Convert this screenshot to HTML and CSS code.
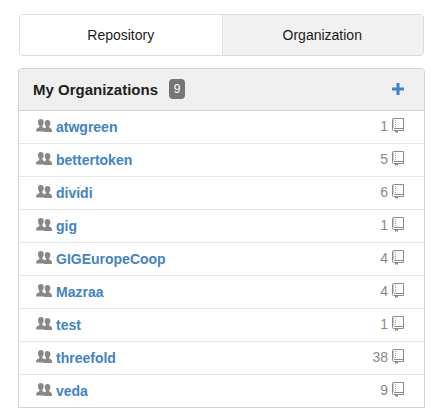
FILE: index.html
```html
<!DOCTYPE html>
<html lang="en">
<head>
<meta charset="utf-8">
<title>My Organizations</title>
<link rel="stylesheet" href="styles.css">
</head>
<body>
<svg class="symbols" aria-hidden="true">
  <symbol id="people" viewBox="0 0 16 13">
    <path d="M4.800 0C2.900 0 2 1.200 2 3c0 1.700.500 3 1.400 3.900v1C3.200 8.700.200 9 .2 10.800V12.500H8.500V9.600c-.400-.900-1.900-1.100-2.200-1.800v-1C7.200 6 7.700 4.700 7.700 3 7.700 1.200 6.700 0 4.800 0z"/>
    <path d="M11.400 1C9.600 1 8.700 2.200 8.700 3.900c0 1.500.500 2.700 1.300 3.400v1l-2 1.400V13h8v-2c0-1.600-2.500-1.900-2.900-2.700v-1c.800-.700 1.300-1.900 1.300-3.400C14.400 2.200 13.200 1 11.400 1z"/>
  </symbol>
  <symbol id="repo" viewBox="0 0 12 15">
    <path fill="none" stroke="currentColor" d="M3 12.500H1.500q-1 0-1-1V1.500q0-1 1-1h10v12H6M2 10.500h9"/>
    <path opacity=".45" d="M1 1h1v9H1z"/>
    <path opacity=".8" d="M3 2h1v1H3zm0 2h1v1H3zm0 2h1v1H3zm0 2h1v1H3z"/>
    <path d="M3 12h3v3l-1.500-1L3 15z"/>
  </symbol>
</svg>
<main>
  <div class="tabs" role="tablist">
    <button class="tab" type="button" role="tab" aria-selected="false">Repository</button>
    <button class="tab active" type="button" role="tab" aria-selected="true">Organization</button>
  </div>
  <section class="panel">
    <header class="panel-header">
      <h2>My Organizations</h2>
      <span class="badge">9</span>
      <a class="add" href="#" aria-label="New organization"><svg viewBox="0 0 12 12"><path d="M4.500 0h3v4.500H12v3H7.500V12h-3V7.500H0v-3h4.500z"/></svg></a>
    </header>
    <ul class="list">
      <li><svg class="people"><use href="#people"/></svg><a href="#">atwgreen</a><span class="count">1</span><svg class="repo"><use href="#repo"/></svg></li>
      <li><svg class="people"><use href="#people"/></svg><a href="#">bettertoken</a><span class="count">5</span><svg class="repo"><use href="#repo"/></svg></li>
      <li><svg class="people"><use href="#people"/></svg><a href="#">dividi</a><span class="count">6</span><svg class="repo"><use href="#repo"/></svg></li>
      <li><svg class="people"><use href="#people"/></svg><a href="#">gig</a><span class="count">1</span><svg class="repo"><use href="#repo"/></svg></li>
      <li><svg class="people"><use href="#people"/></svg><a href="#">GIGEuropeCoop</a><span class="count">4</span><svg class="repo"><use href="#repo"/></svg></li>
      <li><svg class="people"><use href="#people"/></svg><a href="#">Mazraa</a><span class="count">4</span><svg class="repo"><use href="#repo"/></svg></li>
      <li><svg class="people"><use href="#people"/></svg><a href="#">test</a><span class="count">1</span><svg class="repo"><use href="#repo"/></svg></li>
      <li><svg class="people"><use href="#people"/></svg><a href="#">threefold</a><span class="count">38</span><svg class="repo"><use href="#repo"/></svg></li>
      <li><svg class="people"><use href="#people"/></svg><a href="#">veda</a><span class="count">9</span><svg class="repo"><use href="#repo"/></svg></li>
    </ul>
  </section>
</main>
</body>
</html>
```
FILE: styles.css
```css
* {
  box-sizing: border-box;
}

body {
  margin: 0;
  background: #fff;
  color: #212121;
  font: 14px/20px "Liberation Sans", Arial, sans-serif;
}

main {
  padding: 14px 16px 10px 18px;
}

svg {
  display: block;
  flex: none;
  fill: currentColor;
}

.symbols {
  position: absolute;
  width: 0;
  height: 0;
}

.tabs {
  display: flex;
  margin: 0 1px 12px;
  border: 1px solid #dcdcdc;
  border-radius: 4px;
  overflow: hidden;
}

.tab {
  flex: 1;
  height: 40px;
  padding: 0;
  border: 0;
  background: #fff;
  color: #1c1c1c;
  font: inherit;
}

.tab.active {
  background: #f1f1f1;
  box-shadow: inset 1px 0 #e4e4e4;
}

.panel {
  border: 1px solid #d2d3d4;
  border-radius: 4px 4px 0 0;
}

.panel-header {
  display: flex;
  align-items: center;
  height: 42px;
  padding: 0 20px 0 14px;
  border-bottom: 1px solid #d2d3d4;
  border-radius: 3px 3px 0 0;
  background: #efefef;
}

h2 {
  margin: 0;
  font-size: 15px;
  line-height: 20px;
}

.badge {
  margin: 0 0 2px 11px;
  width: 16px;
  height: 20px;
  border-radius: 4px;
  background: #767676;
  color: #fff;
  font-size: 12px;
  line-height: 20px;
  text-align: center;
}

.add {
  margin: 0 0 2px auto;
  color: #4183c4;
}

.add svg {
  width: 12px;
  height: 12px;
}

.list {
  margin: 0;
  padding: 0;
  list-style: none;
}

.list li {
  display: flex;
  align-items: center;
  height: 33px;
  padding: 0 20px 0 17px;
  border-bottom: 1px solid #e6e7e8;
}

.list li:last-child {
  height: 32px;
  border-bottom: 0;
}

.list a {
  color: #4183c4;
  font-weight: bold;
  text-decoration: none;
}

.people {
  width: 16px;
  height: 13px;
  margin: 0 4px 3px 0;
  color: #888;
}

.count {
  margin: 0 4px 2px auto;
  color: #888;
}

.repo {
  width: 12px;
  height: 15px;
  margin-bottom: 3px;
  color: #8c8c8c;
}
```
